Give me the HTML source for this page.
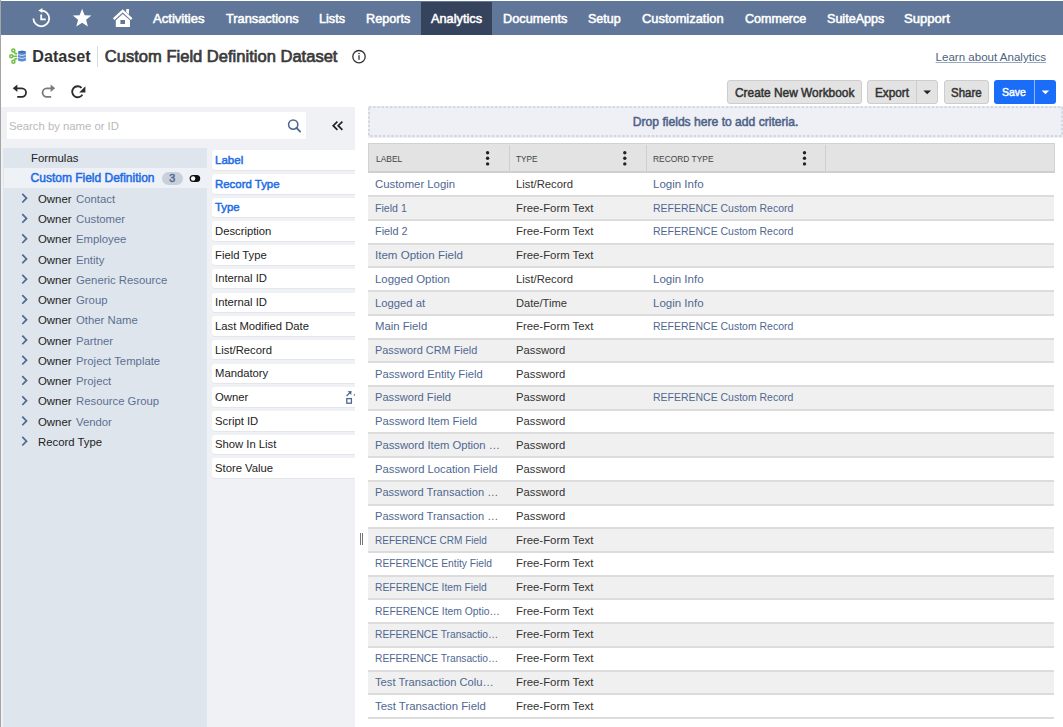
<!DOCTYPE html><html><head><meta charset="utf-8"><style>
html,body{margin:0;padding:0;width:1063px;height:727px;overflow:hidden;background:#fff}
body{position:relative;font-family:"Liberation Sans",sans-serif}
.t{position:absolute;line-height:1;white-space:pre}
.b{position:absolute}
</style></head><body>
<div class="b" style="left:0.00px;top:1.00px;width:1063.00px;height:33.50px;background:#607799"></div>
<div class="b" style="left:421.00px;top:1.50px;width:71.00px;height:33.00px;background:#35435c"></div>
<div class="t" style="left:153.20px;top:13px;font-size:12.60px;font-weight:normal;color:#fff;;transform:scaleX(1.0380);transform-origin:0 0;-webkit-text-stroke:0.53px #fff">Activities</div>
<div class="t" style="left:225.80px;top:13px;font-size:12.60px;font-weight:normal;color:#fff;;transform:scaleX(1.0144);transform-origin:0 0;-webkit-text-stroke:0.53px #fff">Transactions</div>
<div class="t" style="left:319.00px;top:13px;font-size:12.60px;font-weight:normal;color:#fff;;transform:scaleX(1.0036);transform-origin:0 0;-webkit-text-stroke:0.53px #fff">Lists</div>
<div class="t" style="left:365.70px;top:13px;font-size:12.60px;font-weight:normal;color:#fff;;transform:scaleX(1.0041);transform-origin:0 0;-webkit-text-stroke:0.53px #fff">Reports</div>
<div class="t" style="left:430.60px;top:13px;font-size:12.60px;font-weight:normal;color:#fff;;transform:scaleX(1.0135);transform-origin:0 0;-webkit-text-stroke:0.53px #fff">Analytics</div>
<div class="t" style="left:502.60px;top:13px;font-size:12.60px;font-weight:normal;color:#fff;;transform:scaleX(1.0121);transform-origin:0 0;-webkit-text-stroke:0.53px #fff">Documents</div>
<div class="t" style="left:588.20px;top:13px;font-size:12.60px;font-weight:normal;color:#fff;;transform:scaleX(0.9931);transform-origin:0 0;-webkit-text-stroke:0.53px #fff">Setup</div>
<div class="t" style="left:642.00px;top:13px;font-size:12.60px;font-weight:normal;color:#fff;;transform:scaleX(1.0221);transform-origin:0 0;-webkit-text-stroke:0.53px #fff">Customization</div>
<div class="t" style="left:744.50px;top:13px;font-size:12.60px;font-weight:normal;color:#fff;;transform:scaleX(0.9949);transform-origin:0 0;-webkit-text-stroke:0.53px #fff">Commerce</div>
<div class="t" style="left:826.50px;top:13px;font-size:12.60px;font-weight:normal;color:#fff;;transform:scaleX(0.9976);transform-origin:0 0;-webkit-text-stroke:0.53px #fff">SuiteApps</div>
<div class="t" style="left:904.20px;top:13px;font-size:12.60px;font-weight:normal;color:#fff;;transform:scaleX(1.0378);transform-origin:0 0;-webkit-text-stroke:0.53px #fff">Support</div>
<svg class="b" style="left:0;top:0" width="140" height="35" viewBox="0 0 140 35">
<path d="M33.4 18.4 A7.9 7.9 0 1 0 41.3 10.5" fill="none" stroke="#fff" stroke-width="1.8"/>
<path d="M38.4 10.5 L42.4 8.0 L42.4 13.0 Z" fill="#fff"/>
<path d="M41.2 14.6 V19.4 H45.8" fill="none" stroke="#fff" stroke-width="1.8"/>
<path d="M82.1 8.8 L84.6 15.2 L91.4 15.5 L86.1 19.8 L87.9 26.6 L82.1 22.8 L76.3 26.6 L78.1 19.8 L72.8 15.5 L79.6 15.2 Z" fill="#fff"/>
<path d="M113.7 19.2 L122.7 10.8 L131.7 19.2" fill="none" stroke="#fff" stroke-width="2.3" stroke-linejoin="miter"/>
<path d="M126.2 9.1 H129 V14.4 L126.2 11.9 Z" fill="#fff"/>
<path d="M115.8 20.3 L122.7 14 L130 20.3 V27 H115.8 Z M120.4 19.9 V24.1 H125 V19.9 Z" fill="#fff" fill-rule="evenodd"/>
</svg>
<svg class="b" style="left:0;top:40px" width="30" height="30" viewBox="0 40 30 30">
<g stroke="#72bf44" stroke-width="1.6" fill="none">
<circle cx="13.3" cy="50.5" r="1.5"/><circle cx="11.3" cy="56.3" r="1.5"/><circle cx="13.4" cy="61.8" r="1.5"/>
<path d="M14.2 52 L15.4 53.6 H17.2"/><path d="M12.8 56.3 H17.2"/><path d="M14.3 60.3 L15.4 58.7 H17.2"/>
</g>
<path d="M18 51.8 Q22 49.6 26 51.8 V60.4 Q22 62.6 18 60.4 Z" fill="#5b8bd3"/>
<ellipse cx="22" cy="51.8" rx="3.6" ry="1.1" fill="#3f6db5"/>
<g stroke="#fff" stroke-width="0.7" fill="none"><path d="M18 54.6 Q22 56.6 26 54.6"/><path d="M18 57.5 Q22 59.5 26 57.5"/></g>
</svg>
<div class="t" style="left:32.20px;top:48px;font-size:16.19px;font-weight:bold;color:#333;">Dataset</div>
<div class="b" style="left:97.30px;top:46.00px;width:1.00px;height:20.50px;background:#d3dbe6"></div>
<div class="t" style="left:104.80px;top:49px;font-size:16.56px;font-weight:normal;color:#3a3a3a;;-webkit-text-stroke:0.70px #3a3a3a">Custom Field Definition Dataset</div>
<svg class="b" style="left:350px;top:48px" width="18" height="18" viewBox="350 48 18 18">
<circle cx="359" cy="56.7" r="6.2" fill="none" stroke="#333" stroke-width="1.3"/>
<rect x="358.35" y="55.2" width="1.3" height="4.6" fill="#333"/><circle cx="359" cy="53.5" r="0.8" fill="#333"/>
</svg>
<div class="t" style="left:935.60px;top:52px;font-size:11.55px;font-weight:normal;color:#4d5f80;text-decoration:underline;text-decoration-color:#9aa8bd;text-underline-offset:1px">Learn about Analytics</div>
<svg class="b" style="left:0;top:78px" width="100" height="26" viewBox="0 78 100 26">
<path d="M16.4 88.3 H21.8 A4.25 4.25 0 0 1 21.8 96.8 H17.2" fill="none" stroke="#2b2b2b" stroke-width="1.8"/>
<path d="M12.8 88.3 L17.4 84.6 V92 Z" fill="#2b2b2b"/>
<path d="M51 88.3 H46.8 A4.25 4.25 0 0 0 46.8 96.8 H51.2" fill="none" stroke="#7a7a7a" stroke-width="1.8"/>
<path d="M55.2 88.3 L50.6 84.6 V92 Z" fill="#7a7a7a"/>
<path d="M81.6 87.9 A5.5 5.5 0 1 0 82.4 94.6" fill="none" stroke="#2b2b2b" stroke-width="1.8"/>
<path d="M85.4 86.2 V92.4 H79.2 Z" fill="#2b2b2b"/>
</svg>
<div class="b" style="left:727.10px;top:80.40px;width:134.60px;height:23.20px;background:#e3e3e3;border:1px solid #cdcdcd;border-radius:3px;box-sizing:border-box"></div>
<div class="t" style="left:734.70px;top:87px;font-size:12.00px;font-weight:normal;color:#333;;transform:scaleX(0.9909);transform-origin:0 0;-webkit-text-stroke:0.50px #333">Create New Workbook</div>
<div class="b" style="left:867.10px;top:80.40px;width:71.00px;height:23.20px;background:#e3e3e3;border:1px solid #cdcdcd;border-radius:3px;box-sizing:border-box"></div>
<div class="b" style="left:916.20px;top:80.40px;width:1.00px;height:23.20px;background:#cdcdcd"></div>
<div class="t" style="left:875.00px;top:87px;font-size:12.00px;font-weight:normal;color:#333;;transform:scaleX(0.9803);transform-origin:0 0;-webkit-text-stroke:0.50px #333">Export</div>
<svg class="b" style="left:920px;top:86px" width="14" height="12" viewBox="920 86 14 12"><path d="M923.4 90.4 H931 L927.2 94.2 Z" fill="#222"/></svg>
<div class="b" style="left:943.90px;top:80.40px;width:45.40px;height:23.20px;background:#e3e3e3;border:1px solid #cdcdcd;border-radius:3px;box-sizing:border-box"></div>
<div class="t" style="left:951.20px;top:87px;font-size:12.00px;font-weight:normal;color:#333;;transform:scaleX(0.9556);transform-origin:0 0;-webkit-text-stroke:0.50px #333">Share</div>
<div class="b" style="left:994.30px;top:80.40px;width:61.90px;height:23.20px;background:#1a6df9;border-radius:3px"></div>
<div class="b" style="left:1033.60px;top:80.40px;width:1.00px;height:23.20px;background:#8fb6f7"></div>
<div class="t" style="left:1002.20px;top:86px;font-size:11.60px;font-weight:normal;color:#fff;;transform:scaleX(0.9039);transform-origin:0 0;-webkit-text-stroke:0.49px #fff">Save</div>
<svg class="b" style="left:1036px;top:86px" width="16" height="12" viewBox="1036 86 16 12"><path d="M1041.6 90.4 H1049.2 L1045.4 94.2 Z" fill="#fff"/></svg>
<div class="b" style="left:1.00px;top:106.50px;width:354.00px;height:620.50px;background:#eff1f5"></div>
<div class="b" style="left:7.00px;top:112.20px;width:299.30px;height:26.80px;background:#fff"></div>
<div class="t" style="left:9.00px;top:121px;font-size:11.31px;font-weight:normal;color:#b9b9b9;">Search by name or ID</div>
<svg class="b" style="left:280px;top:112px" width="70" height="28" viewBox="280 112 70 28">
<circle cx="293.2" cy="124.6" r="4.6" fill="none" stroke="#50698f" stroke-width="1.6"/>
<path d="M296.6 128 L300.2 131.6" stroke="#50698f" stroke-width="1.8" stroke-linecap="round"/>
<path d="M337.4 121.6 L333.2 125.7 L337.4 129.8 M342.4 121.6 L338.2 125.7 L342.4 129.8" fill="none" stroke="#222" stroke-width="1.7"/>
</svg>
<div class="b" style="left:3.30px;top:148.00px;width:203.30px;height:579.00px;background:#dfe5ec"></div>
<div class="b" style="left:3.50px;top:168.00px;width:203.00px;height:20.00px;background:#eef1f5"></div>
<div class="t" style="left:30.60px;top:153px;font-size:11.80px;font-weight:normal;color:#222;;transform:scaleX(0.9638);transform-origin:0 0">Formulas</div>
<div class="t" style="left:30.60px;top:172px;font-size:11.99px;font-weight:normal;color:#1d6ce6;;-webkit-text-stroke:0.50px #1d6ce6">Custom Field Definition</div>
<div class="b" style="left:162.40px;top:171.60px;width:20.30px;height:13.20px;background:#c7d0dc;border-radius:7px"></div>
<div class="t" style="left:169.20px;top:173px;font-size:10.80px;font-weight:normal;color:#55688a;;-webkit-text-stroke:0.45px #55688a">3</div>
<svg class="b" style="left:186px;top:172px" width="18" height="12" viewBox="186 172 18 12">
<rect x="189.6" y="175" width="10.6" height="7" rx="3.5" fill="#111"/><circle cx="193.1" cy="178.5" r="2.2" fill="#fff"/>
</svg>
<div class="t" style="left:37.50px;top:194px;font-size:11.80px;font-weight:normal;color:#222;;transform:scaleX(0.9668);transform-origin:0 0">Owner</div>
<div class="t" style="left:75.50px;top:194px;font-size:11.80px;font-weight:normal;color:#5b7094;;transform:scaleX(0.9600);transform-origin:0 0">Contact</div>
<div class="t" style="left:37.50px;top:214px;font-size:11.80px;font-weight:normal;color:#222;;transform:scaleX(0.9668);transform-origin:0 0">Owner</div>
<div class="t" style="left:75.50px;top:214px;font-size:11.80px;font-weight:normal;color:#5b7094;;transform:scaleX(0.9600);transform-origin:0 0">Customer</div>
<div class="t" style="left:37.50px;top:234px;font-size:11.80px;font-weight:normal;color:#222;;transform:scaleX(0.9668);transform-origin:0 0">Owner</div>
<div class="t" style="left:75.50px;top:234px;font-size:11.80px;font-weight:normal;color:#5b7094;;transform:scaleX(0.9600);transform-origin:0 0">Employee</div>
<div class="t" style="left:37.50px;top:255px;font-size:11.80px;font-weight:normal;color:#222;;transform:scaleX(0.9668);transform-origin:0 0">Owner</div>
<div class="t" style="left:75.50px;top:255px;font-size:11.80px;font-weight:normal;color:#5b7094;;transform:scaleX(0.9600);transform-origin:0 0">Entity</div>
<div class="t" style="left:37.50px;top:275px;font-size:11.80px;font-weight:normal;color:#222;;transform:scaleX(0.9668);transform-origin:0 0">Owner</div>
<div class="t" style="left:75.50px;top:275px;font-size:11.80px;font-weight:normal;color:#5b7094;;transform:scaleX(0.9600);transform-origin:0 0">Generic Resource</div>
<div class="t" style="left:37.50px;top:295px;font-size:11.80px;font-weight:normal;color:#222;;transform:scaleX(0.9668);transform-origin:0 0">Owner</div>
<div class="t" style="left:75.50px;top:295px;font-size:11.80px;font-weight:normal;color:#5b7094;;transform:scaleX(0.9600);transform-origin:0 0">Group</div>
<div class="t" style="left:37.50px;top:315px;font-size:11.80px;font-weight:normal;color:#222;;transform:scaleX(0.9668);transform-origin:0 0">Owner</div>
<div class="t" style="left:75.50px;top:315px;font-size:11.80px;font-weight:normal;color:#5b7094;;transform:scaleX(0.9600);transform-origin:0 0">Other Name</div>
<div class="t" style="left:37.50px;top:336px;font-size:11.80px;font-weight:normal;color:#222;;transform:scaleX(0.9668);transform-origin:0 0">Owner</div>
<div class="t" style="left:75.50px;top:336px;font-size:11.80px;font-weight:normal;color:#5b7094;;transform:scaleX(0.9600);transform-origin:0 0">Partner</div>
<div class="t" style="left:37.50px;top:356px;font-size:11.80px;font-weight:normal;color:#222;;transform:scaleX(0.9668);transform-origin:0 0">Owner</div>
<div class="t" style="left:75.50px;top:356px;font-size:11.80px;font-weight:normal;color:#5b7094;;transform:scaleX(0.9600);transform-origin:0 0">Project Template</div>
<div class="t" style="left:37.50px;top:376px;font-size:11.80px;font-weight:normal;color:#222;;transform:scaleX(0.9668);transform-origin:0 0">Owner</div>
<div class="t" style="left:75.50px;top:376px;font-size:11.80px;font-weight:normal;color:#5b7094;;transform:scaleX(0.9600);transform-origin:0 0">Project</div>
<div class="t" style="left:37.50px;top:396px;font-size:11.80px;font-weight:normal;color:#222;;transform:scaleX(0.9668);transform-origin:0 0">Owner</div>
<div class="t" style="left:75.50px;top:396px;font-size:11.80px;font-weight:normal;color:#5b7094;;transform:scaleX(0.9600);transform-origin:0 0">Resource Group</div>
<div class="t" style="left:37.50px;top:417px;font-size:11.80px;font-weight:normal;color:#222;;transform:scaleX(0.9668);transform-origin:0 0">Owner</div>
<div class="t" style="left:75.50px;top:417px;font-size:11.80px;font-weight:normal;color:#5b7094;;transform:scaleX(0.9600);transform-origin:0 0">Vendor</div>
<div class="t" style="left:37.50px;top:437px;font-size:11.80px;font-weight:normal;color:#222;;transform:scaleX(0.9600);transform-origin:0 0">Record Type</div>
<svg class="b" style="left:0;top:0" width="40" height="727" viewBox="0 0 40 727"><path d="M22.3 193.90 L26.5 198.20 L22.3 202.50" fill="none" stroke="#50698f" stroke-width="1.75"/><path d="M22.3 214.15 L26.5 218.45 L22.3 222.75" fill="none" stroke="#50698f" stroke-width="1.75"/><path d="M22.3 234.40 L26.5 238.70 L22.3 243.00" fill="none" stroke="#50698f" stroke-width="1.75"/><path d="M22.3 254.65 L26.5 258.95 L22.3 263.25" fill="none" stroke="#50698f" stroke-width="1.75"/><path d="M22.3 274.90 L26.5 279.20 L22.3 283.50" fill="none" stroke="#50698f" stroke-width="1.75"/><path d="M22.3 295.15 L26.5 299.45 L22.3 303.75" fill="none" stroke="#50698f" stroke-width="1.75"/><path d="M22.3 315.40 L26.5 319.70 L22.3 324.00" fill="none" stroke="#50698f" stroke-width="1.75"/><path d="M22.3 335.65 L26.5 339.95 L22.3 344.25" fill="none" stroke="#50698f" stroke-width="1.75"/><path d="M22.3 355.90 L26.5 360.20 L22.3 364.50" fill="none" stroke="#50698f" stroke-width="1.75"/><path d="M22.3 376.15 L26.5 380.45 L22.3 384.75" fill="none" stroke="#50698f" stroke-width="1.75"/><path d="M22.3 396.40 L26.5 400.70 L22.3 405.00" fill="none" stroke="#50698f" stroke-width="1.75"/><path d="M22.3 416.65 L26.5 420.95 L22.3 425.25" fill="none" stroke="#50698f" stroke-width="1.75"/><path d="M22.3 436.90 L26.5 441.20 L22.3 445.50" fill="none" stroke="#50698f" stroke-width="1.75"/></svg>
<div class="b" style="left:212.00px;top:150.30px;width:143.00px;height:19.50px;background:#fff;border-radius:3px 0 0 3px;box-shadow:0 1px 0 #e3e6ec"></div>
<div class="t" style="left:215.40px;top:155px;font-size:11.80px;font-weight:normal;color:#1d6ce6;;transform:scaleX(0.9767);transform-origin:0 0;-webkit-text-stroke:0.50px #1d6ce6">Label</div>
<div class="b" style="left:212.00px;top:174.00px;width:143.00px;height:19.50px;background:#fff;border-radius:3px 0 0 3px;box-shadow:0 1px 0 #e3e6ec"></div>
<div class="t" style="left:215.40px;top:179px;font-size:11.80px;font-weight:normal;color:#1d6ce6;;transform:scaleX(0.9687);transform-origin:0 0;-webkit-text-stroke:0.50px #1d6ce6">Record Type</div>
<div class="b" style="left:212.00px;top:197.70px;width:143.00px;height:19.50px;background:#fff;border-radius:3px 0 0 3px;box-shadow:0 1px 0 #e3e6ec"></div>
<div class="t" style="left:215.40px;top:202px;font-size:11.80px;font-weight:normal;color:#1d6ce6;;transform:scaleX(0.9655);transform-origin:0 0;-webkit-text-stroke:0.50px #1d6ce6">Type</div>
<div class="b" style="left:212.00px;top:221.40px;width:143.00px;height:19.50px;background:#fff;border-radius:3px 0 0 3px;box-shadow:0 1px 0 #e3e6ec"></div>
<div class="t" style="left:215.40px;top:226px;font-size:11.80px;font-weight:normal;color:#222;;transform:scaleX(0.9550);transform-origin:0 0">Description</div>
<div class="b" style="left:212.00px;top:245.10px;width:143.00px;height:19.50px;background:#fff;border-radius:3px 0 0 3px;box-shadow:0 1px 0 #e3e6ec"></div>
<div class="t" style="left:215.40px;top:250px;font-size:11.80px;font-weight:normal;color:#222;;transform:scaleX(0.9550);transform-origin:0 0">Field Type</div>
<div class="b" style="left:212.00px;top:268.80px;width:143.00px;height:19.50px;background:#fff;border-radius:3px 0 0 3px;box-shadow:0 1px 0 #e3e6ec"></div>
<div class="t" style="left:215.40px;top:273px;font-size:11.80px;font-weight:normal;color:#222;;transform:scaleX(0.9550);transform-origin:0 0">Internal ID</div>
<div class="b" style="left:212.00px;top:292.50px;width:143.00px;height:19.50px;background:#fff;border-radius:3px 0 0 3px;box-shadow:0 1px 0 #e3e6ec"></div>
<div class="t" style="left:215.40px;top:297px;font-size:11.80px;font-weight:normal;color:#222;;transform:scaleX(0.9550);transform-origin:0 0">Internal ID</div>
<div class="b" style="left:212.00px;top:316.20px;width:143.00px;height:19.50px;background:#fff;border-radius:3px 0 0 3px;box-shadow:0 1px 0 #e3e6ec"></div>
<div class="t" style="left:215.40px;top:321px;font-size:11.80px;font-weight:normal;color:#222;;transform:scaleX(0.9550);transform-origin:0 0">Last Modified Date</div>
<div class="b" style="left:212.00px;top:339.90px;width:143.00px;height:19.50px;background:#fff;border-radius:3px 0 0 3px;box-shadow:0 1px 0 #e3e6ec"></div>
<div class="t" style="left:215.40px;top:345px;font-size:11.80px;font-weight:normal;color:#222;;transform:scaleX(0.9550);transform-origin:0 0">List/Record</div>
<div class="b" style="left:212.00px;top:363.60px;width:143.00px;height:19.50px;background:#fff;border-radius:3px 0 0 3px;box-shadow:0 1px 0 #e3e6ec"></div>
<div class="t" style="left:215.40px;top:368px;font-size:11.80px;font-weight:normal;color:#222;;transform:scaleX(0.9550);transform-origin:0 0">Mandatory</div>
<div class="b" style="left:212.00px;top:387.30px;width:143.00px;height:19.50px;background:#fff;border-radius:3px 0 0 3px;box-shadow:0 1px 0 #e3e6ec"></div>
<div class="t" style="left:215.40px;top:392px;font-size:11.80px;font-weight:normal;color:#222;;transform:scaleX(0.9550);transform-origin:0 0">Owner</div>
<div class="b" style="left:212.00px;top:411.00px;width:143.00px;height:19.50px;background:#fff;border-radius:3px 0 0 3px;box-shadow:0 1px 0 #e3e6ec"></div>
<div class="t" style="left:215.40px;top:416px;font-size:11.80px;font-weight:normal;color:#222;;transform:scaleX(0.9550);transform-origin:0 0">Script ID</div>
<div class="b" style="left:212.00px;top:434.70px;width:143.00px;height:19.50px;background:#fff;border-radius:3px 0 0 3px;box-shadow:0 1px 0 #e3e6ec"></div>
<div class="t" style="left:215.40px;top:439px;font-size:11.80px;font-weight:normal;color:#222;;transform:scaleX(0.9550);transform-origin:0 0">Show In List</div>
<div class="b" style="left:212.00px;top:458.40px;width:143.00px;height:19.50px;background:#fff;border-radius:3px 0 0 3px;box-shadow:0 1px 0 #e3e6ec"></div>
<div class="t" style="left:215.40px;top:463px;font-size:11.80px;font-weight:normal;color:#222;;transform:scaleX(0.9550);transform-origin:0 0">Store Value</div>
<svg class="b" style="left:340px;top:385px" width="15" height="22" viewBox="340 385 15 22">
<rect x="346.8" y="398.6" width="4.6" height="4.6" fill="none" stroke="#4f6791" stroke-width="1.3"/>
<path d="M346.6 396 L350.2 392.4" fill="none" stroke="#4f6791" stroke-width="1.3"/>
<path d="M351.6 390.9 L347.6 391.3 L351.2 394.9 Z" fill="#4f6791"/>
<path d="M353.4 395.6 L355 393.6 L355 395.6 Z" fill="#4f6791"/>
</svg>
<div class="b" style="left:360.00px;top:533.20px;width:1.20px;height:11.60px;background:#777"></div>
<div class="b" style="left:362.00px;top:533.20px;width:1.20px;height:11.60px;background:#777"></div>
<div class="b" style="left:368.00px;top:106.00px;width:695.00px;height:31.50px;background:#eef0f5"></div>
<svg class="b" style="left:360px;top:100px" width="703" height="45" viewBox="360 100 703 45"><rect x="369" y="107.1" width="693" height="28.9" fill="none" stroke="#d0d6df" stroke-width="1.8" stroke-dasharray="2.4 1.8"/></svg>
<div class="t" style="left:632.80px;top:116px;font-size:12.11px;font-weight:normal;color:#4e6288;;-webkit-text-stroke:0.51px #4e6288">Drop fields here to add criteria.</div>
<div class="b" style="left:368.00px;top:143.00px;width:686.50px;height:30.00px;background:#e3e3e3;border:1px solid #d2d2d2;border-bottom:2px solid #cfcfcf;box-sizing:border-box"></div>
<div class="b" style="left:508.60px;top:144.80px;width:1.00px;height:27.00px;background:#cfcfcf"></div>
<div class="b" style="left:645.60px;top:144.80px;width:1.00px;height:27.00px;background:#cfcfcf"></div>
<div class="b" style="left:825.30px;top:144.80px;width:1.00px;height:27.00px;background:#cfcfcf"></div>
<div class="t" style="left:376.40px;top:154px;font-size:9.80px;font-weight:normal;color:#444;;transform:scaleX(0.8620);transform-origin:0 0">LABEL</div>
<div class="t" style="left:516.00px;top:154px;font-size:9.80px;font-weight:normal;color:#444;;transform:scaleX(0.8399);transform-origin:0 0">TYPE</div>
<div class="t" style="left:652.90px;top:154px;font-size:9.80px;font-weight:normal;color:#444;;transform:scaleX(0.8568);transform-origin:0 0">RECORD TYPE</div>
<svg class="b" style="left:0;top:0" width="1063" height="200" viewBox="0 0 1063 200"><circle cx="487.6" cy="152.70" r="1.7" fill="#222"/><circle cx="487.6" cy="158.30" r="1.7" fill="#222"/><circle cx="487.6" cy="163.90" r="1.7" fill="#222"/><circle cx="624.8" cy="152.70" r="1.7" fill="#222"/><circle cx="624.8" cy="158.30" r="1.7" fill="#222"/><circle cx="624.8" cy="163.90" r="1.7" fill="#222"/><circle cx="804.5" cy="152.70" r="1.7" fill="#222"/><circle cx="804.5" cy="158.30" r="1.7" fill="#222"/><circle cx="804.5" cy="163.90" r="1.7" fill="#222"/></svg>
<div class="b" style="left:368.00px;top:195.00px;width:686.00px;height:2.00px;background:#dcdcdc"></div>
<div class="t" style="left:375.40px;top:178px;font-size:11.60px;font-weight:normal;color:#4f6891;;transform:scaleX(0.9782);transform-origin:0 0">Customer Login</div>
<div class="t" style="left:516.00px;top:178px;font-size:11.60px;font-weight:normal;color:#333;;transform:scaleX(0.9715);transform-origin:0 0">List/Record</div>
<div class="t" style="left:652.90px;top:178px;font-size:11.60px;font-weight:normal;color:#4f6891;;transform:scaleX(0.9930);transform-origin:0 0">Login Info</div>
<div class="b" style="left:368.00px;top:197.00px;width:686.00px;height:22.00px;background:#f0f0f0"></div>
<div class="b" style="left:368.00px;top:219.00px;width:686.00px;height:2.00px;background:#dcdcdc"></div>
<div class="t" style="left:375.40px;top:202px;font-size:11.60px;font-weight:normal;color:#4f6891;;transform:scaleX(0.9133);transform-origin:0 0">Field 1</div>
<div class="t" style="left:516.00px;top:202px;font-size:11.60px;font-weight:normal;color:#333;;transform:scaleX(0.9802);transform-origin:0 0">Free-Form Text</div>
<div class="t" style="left:652.90px;top:202px;font-size:11.60px;font-weight:normal;color:#4f6891;;transform:scaleX(0.9037);transform-origin:0 0">REFERENCE Custom Record</div>
<div class="b" style="left:368.00px;top:243.00px;width:686.00px;height:2.00px;background:#dcdcdc"></div>
<div class="t" style="left:375.40px;top:225px;font-size:11.60px;font-weight:normal;color:#4f6891;;transform:scaleX(0.9363);transform-origin:0 0">Field 2</div>
<div class="t" style="left:516.00px;top:225px;font-size:11.60px;font-weight:normal;color:#333;;transform:scaleX(0.9802);transform-origin:0 0">Free-Form Text</div>
<div class="t" style="left:652.90px;top:225px;font-size:11.60px;font-weight:normal;color:#4f6891;;transform:scaleX(0.9037);transform-origin:0 0">REFERENCE Custom Record</div>
<div class="b" style="left:368.00px;top:245.00px;width:686.00px;height:21.00px;background:#f0f0f0"></div>
<div class="b" style="left:368.00px;top:266.00px;width:686.00px;height:2.00px;background:#dcdcdc"></div>
<div class="t" style="left:375.40px;top:249px;font-size:11.60px;font-weight:normal;color:#4f6891;;transform:scaleX(0.9963);transform-origin:0 0">Item Option Field</div>
<div class="t" style="left:516.00px;top:249px;font-size:11.60px;font-weight:normal;color:#333;;transform:scaleX(0.9802);transform-origin:0 0">Free-Form Text</div>
<div class="b" style="left:368.00px;top:290.00px;width:686.00px;height:2.00px;background:#dcdcdc"></div>
<div class="t" style="left:375.40px;top:273px;font-size:11.60px;font-weight:normal;color:#4f6891;;transform:scaleX(0.9841);transform-origin:0 0">Logged Option</div>
<div class="t" style="left:516.00px;top:273px;font-size:11.60px;font-weight:normal;color:#333;;transform:scaleX(0.9715);transform-origin:0 0">List/Record</div>
<div class="t" style="left:652.90px;top:273px;font-size:11.60px;font-weight:normal;color:#4f6891;;transform:scaleX(0.9930);transform-origin:0 0">Login Info</div>
<div class="b" style="left:368.00px;top:292.00px;width:686.00px;height:22.00px;background:#f0f0f0"></div>
<div class="b" style="left:368.00px;top:314.00px;width:686.00px;height:2.00px;background:#dcdcdc"></div>
<div class="t" style="left:375.40px;top:297px;font-size:11.60px;font-weight:normal;color:#4f6891;;transform:scaleX(0.9708);transform-origin:0 0">Logged at</div>
<div class="t" style="left:516.00px;top:297px;font-size:11.60px;font-weight:normal;color:#333;;transform:scaleX(0.9600);transform-origin:0 0">Date/Time</div>
<div class="t" style="left:652.90px;top:297px;font-size:11.60px;font-weight:normal;color:#4f6891;;transform:scaleX(0.9930);transform-origin:0 0">Login Info</div>
<div class="b" style="left:368.00px;top:338.00px;width:686.00px;height:2.00px;background:#dcdcdc"></div>
<div class="t" style="left:375.40px;top:320px;font-size:11.60px;font-weight:normal;color:#4f6891;;transform:scaleX(0.9755);transform-origin:0 0">Main Field</div>
<div class="t" style="left:516.00px;top:320px;font-size:11.60px;font-weight:normal;color:#333;;transform:scaleX(0.9802);transform-origin:0 0">Free-Form Text</div>
<div class="t" style="left:652.90px;top:320px;font-size:11.60px;font-weight:normal;color:#4f6891;;transform:scaleX(0.9037);transform-origin:0 0">REFERENCE Custom Record</div>
<div class="b" style="left:368.00px;top:340.00px;width:686.00px;height:21.00px;background:#f0f0f0"></div>
<div class="b" style="left:368.00px;top:361.00px;width:686.00px;height:2.00px;background:#dcdcdc"></div>
<div class="t" style="left:375.40px;top:344px;font-size:11.60px;font-weight:normal;color:#4f6891;;transform:scaleX(0.9390);transform-origin:0 0">Password CRM Field</div>
<div class="t" style="left:516.00px;top:344px;font-size:11.60px;font-weight:normal;color:#333;;transform:scaleX(0.9699);transform-origin:0 0">Password</div>
<div class="b" style="left:368.00px;top:385.00px;width:686.00px;height:2.00px;background:#dcdcdc"></div>
<div class="t" style="left:375.40px;top:368px;font-size:11.60px;font-weight:normal;color:#4f6891;;transform:scaleX(0.9656);transform-origin:0 0">Password Entity Field</div>
<div class="t" style="left:516.00px;top:368px;font-size:11.60px;font-weight:normal;color:#333;;transform:scaleX(0.9699);transform-origin:0 0">Password</div>
<div class="b" style="left:368.00px;top:387.00px;width:686.00px;height:22.00px;background:#f0f0f0"></div>
<div class="b" style="left:368.00px;top:409.00px;width:686.00px;height:2.00px;background:#dcdcdc"></div>
<div class="t" style="left:375.40px;top:391px;font-size:11.60px;font-weight:normal;color:#4f6891;;transform:scaleX(0.9584);transform-origin:0 0">Password Field</div>
<div class="t" style="left:516.00px;top:391px;font-size:11.60px;font-weight:normal;color:#333;;transform:scaleX(0.9699);transform-origin:0 0">Password</div>
<div class="t" style="left:652.90px;top:391px;font-size:11.60px;font-weight:normal;color:#4f6891;;transform:scaleX(0.9037);transform-origin:0 0">REFERENCE Custom Record</div>
<div class="b" style="left:368.00px;top:432.00px;width:686.00px;height:2.00px;background:#dcdcdc"></div>
<div class="t" style="left:375.40px;top:415px;font-size:11.60px;font-weight:normal;color:#4f6891;;transform:scaleX(0.9707);transform-origin:0 0">Password Item Field</div>
<div class="t" style="left:516.00px;top:415px;font-size:11.60px;font-weight:normal;color:#333;;transform:scaleX(0.9699);transform-origin:0 0">Password</div>
<div class="b" style="left:368.00px;top:434.00px;width:686.00px;height:22.00px;background:#f0f0f0"></div>
<div class="b" style="left:368.00px;top:456.00px;width:686.00px;height:2.00px;background:#dcdcdc"></div>
<div class="t" style="left:375.40px;top:439px;font-size:11.60px;font-weight:normal;color:#4f6891;;transform:scaleX(0.9695);transform-origin:0 0">Password Item Option …</div>
<div class="t" style="left:516.00px;top:439px;font-size:11.60px;font-weight:normal;color:#333;;transform:scaleX(0.9699);transform-origin:0 0">Password</div>
<div class="b" style="left:368.00px;top:480.00px;width:686.00px;height:2.00px;background:#dcdcdc"></div>
<div class="t" style="left:375.40px;top:463px;font-size:11.60px;font-weight:normal;color:#4f6891;;transform:scaleX(0.9701);transform-origin:0 0">Password Location Field</div>
<div class="t" style="left:516.00px;top:463px;font-size:11.60px;font-weight:normal;color:#333;;transform:scaleX(0.9699);transform-origin:0 0">Password</div>
<div class="b" style="left:368.00px;top:482.00px;width:686.00px;height:22.00px;background:#f0f0f0"></div>
<div class="b" style="left:368.00px;top:504.00px;width:686.00px;height:2.00px;background:#dcdcdc"></div>
<div class="t" style="left:375.40px;top:486px;font-size:11.60px;font-weight:normal;color:#4f6891;;transform:scaleX(0.9562);transform-origin:0 0">Password Transaction …</div>
<div class="t" style="left:516.00px;top:486px;font-size:11.60px;font-weight:normal;color:#333;;transform:scaleX(0.9699);transform-origin:0 0">Password</div>
<div class="b" style="left:368.00px;top:527.00px;width:686.00px;height:2.00px;background:#dcdcdc"></div>
<div class="t" style="left:375.40px;top:510px;font-size:11.60px;font-weight:normal;color:#4f6891;;transform:scaleX(0.9562);transform-origin:0 0">Password Transaction …</div>
<div class="t" style="left:516.00px;top:510px;font-size:11.60px;font-weight:normal;color:#333;;transform:scaleX(0.9699);transform-origin:0 0">Password</div>
<div class="b" style="left:368.00px;top:529.00px;width:686.00px;height:22.00px;background:#f0f0f0"></div>
<div class="b" style="left:368.00px;top:551.00px;width:686.00px;height:2.00px;background:#dcdcdc"></div>
<div class="t" style="left:375.40px;top:534px;font-size:11.60px;font-weight:normal;color:#4f6891;;transform:scaleX(0.8637);transform-origin:0 0">REFERENCE CRM Field</div>
<div class="t" style="left:516.00px;top:534px;font-size:11.60px;font-weight:normal;color:#333;;transform:scaleX(0.9802);transform-origin:0 0">Free-Form Text</div>
<div class="b" style="left:368.00px;top:575.00px;width:686.00px;height:2.00px;background:#dcdcdc"></div>
<div class="t" style="left:375.40px;top:557px;font-size:11.60px;font-weight:normal;color:#4f6891;;transform:scaleX(0.8861);transform-origin:0 0">REFERENCE Entity Field</div>
<div class="t" style="left:516.00px;top:557px;font-size:11.60px;font-weight:normal;color:#333;;transform:scaleX(0.9802);transform-origin:0 0">Free-Form Text</div>
<div class="b" style="left:368.00px;top:577.00px;width:686.00px;height:21.00px;background:#f0f0f0"></div>
<div class="b" style="left:368.00px;top:598.00px;width:686.00px;height:2.00px;background:#dcdcdc"></div>
<div class="t" style="left:375.40px;top:581px;font-size:11.60px;font-weight:normal;color:#4f6891;;transform:scaleX(0.8902);transform-origin:0 0">REFERENCE Item Field</div>
<div class="t" style="left:516.00px;top:581px;font-size:11.60px;font-weight:normal;color:#333;;transform:scaleX(0.9802);transform-origin:0 0">Free-Form Text</div>
<div class="b" style="left:368.00px;top:622.00px;width:686.00px;height:2.00px;background:#dcdcdc"></div>
<div class="t" style="left:375.40px;top:605px;font-size:11.60px;font-weight:normal;color:#4f6891;;transform:scaleX(0.8936);transform-origin:0 0">REFERENCE Item Optio…</div>
<div class="t" style="left:516.00px;top:605px;font-size:11.60px;font-weight:normal;color:#333;;transform:scaleX(0.9802);transform-origin:0 0">Free-Form Text</div>
<div class="b" style="left:368.00px;top:624.00px;width:686.00px;height:22.00px;background:#f0f0f0"></div>
<div class="b" style="left:368.00px;top:646.00px;width:686.00px;height:2.00px;background:#dcdcdc"></div>
<div class="t" style="left:375.40px;top:628px;font-size:11.60px;font-weight:normal;color:#4f6891;;transform:scaleX(0.8814);transform-origin:0 0">REFERENCE Transactio…</div>
<div class="t" style="left:516.00px;top:628px;font-size:11.60px;font-weight:normal;color:#333;;transform:scaleX(0.9802);transform-origin:0 0">Free-Form Text</div>
<div class="b" style="left:368.00px;top:670.00px;width:686.00px;height:2.00px;background:#dcdcdc"></div>
<div class="t" style="left:375.40px;top:652px;font-size:11.60px;font-weight:normal;color:#4f6891;;transform:scaleX(0.8814);transform-origin:0 0">REFERENCE Transactio…</div>
<div class="t" style="left:516.00px;top:652px;font-size:11.60px;font-weight:normal;color:#333;;transform:scaleX(0.9802);transform-origin:0 0">Free-Form Text</div>
<div class="b" style="left:368.00px;top:672.00px;width:686.00px;height:21.00px;background:#f0f0f0"></div>
<div class="b" style="left:368.00px;top:693.00px;width:686.00px;height:2.00px;background:#dcdcdc"></div>
<div class="t" style="left:375.40px;top:676px;font-size:11.60px;font-weight:normal;color:#4f6891;;transform:scaleX(0.9647);transform-origin:0 0">Test Transaction Colu…</div>
<div class="t" style="left:516.00px;top:676px;font-size:11.60px;font-weight:normal;color:#333;;transform:scaleX(0.9802);transform-origin:0 0">Free-Form Text</div>
<div class="b" style="left:368.00px;top:717.00px;width:686.00px;height:2.00px;background:#dcdcdc"></div>
<div class="t" style="left:375.40px;top:700px;font-size:11.60px;font-weight:normal;color:#4f6891;;transform:scaleX(0.9829);transform-origin:0 0">Test Transaction Field</div>
<div class="t" style="left:516.00px;top:700px;font-size:11.60px;font-weight:normal;color:#333;;transform:scaleX(0.9802);transform-origin:0 0">Free-Form Text</div>
<div class="b" style="left:0.00px;top:0.00px;width:1.00px;height:727.00px;background:#a5a5a5"></div>
</body></html>
